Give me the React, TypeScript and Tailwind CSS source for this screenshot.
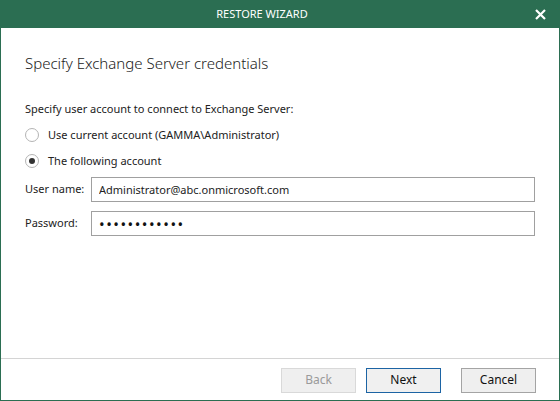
import { useState } from "react";

const font = { fontFamily: '"Noto Sans", "Open Sans", sans-serif' };

function Radio({ checked, label, onClick }: { checked: boolean; label: string; onClick: () => void }) {
  return (
    <div className="flex items-center h-[18px] cursor-default" onClick={onClick}>
      <span className="w-[14px] h-[14px] rounded-full border border-[#b4b4b4] bg-white flex items-center justify-center">
        {checked && <span className="w-[6px] h-[6px] rounded-full bg-[#333333]" />}
      </span>
      <span className="ml-[9px] text-[11px] text-[#222222]">{label}</span>
    </div>
  );
}

export default function App() {
  const [useCurrent, setUseCurrent] = useState(false);
  const [userName, setUserName] = useState("Administrator@abc.onmicrosoft.com");
  const [password, setPassword] = useState("passwordabcd");

  return (
    <div className="w-[560px] h-[401px] flex flex-col bg-white" style={font}>
      <div className="h-[28px] bg-[#2b6e52] flex items-center shrink-0">
        <div className="flex-1 text-center text-white text-[11px] pl-[4px]">RESTORE WIZARD</div>
        <div className="w-[40px] flex items-center justify-center text-white">
          <svg width="11" height="11" viewBox="0 0 11 11">
            <path d="M1 1 L10 10 M10 1 L1 10" stroke="white" strokeWidth="2.2" />
          </svg>
        </div>
      </div>

      <div className="flex-1 flex flex-col border-x border-b border-[#2b6e52]">
        <div className="flex-1 px-[24px] pt-[24px]">
          <div className="text-[15px] leading-[22px] font-light text-[#222222]">
            Specify Exchange Server credentials
          </div>
          <div className="mt-[26px] text-[11px] leading-[18px] text-[#222222]">
            Specify user account to connect to Exchange Server:
          </div>
          <div className="mt-[8px] flex flex-col gap-[8px]">
            <Radio
              checked={useCurrent}
              label="Use current account (GAMMA\Administrator)"
              onClick={() => setUseCurrent(true)}
            />
            <Radio
              checked={!useCurrent}
              label="The following account"
              onClick={() => setUseCurrent(false)}
            />
          </div>
          <div className="mt-[7px] flex flex-col gap-[9px]">
            <div className="flex items-center">
              <label className="w-[66px] text-[11px] text-[#222222]">User name:</label>
              <input
                value={userName}
                onChange={(e) => setUserName(e.target.value)}
                className="flex-1 h-[25px] border border-[#a0a0a0] px-[7px] text-[11px] text-[#222222] outline-none"
              />
            </div>
            <div className="flex items-center">
              <label className="w-[66px] text-[11px] text-[#222222]">Password:</label>
              <input
                type="password"
                value={password}
                onChange={(e) => setPassword(e.target.value)}
                className="flex-1 h-[25px] border border-[#a0a0a0] px-[7px] text-[15px] tracking-[1.5px] text-[#111111] outline-none"
              />
            </div>
          </div>
        </div>

        <div className="h-px bg-[#d4d4d4]" />
        <div className="h-[41px] flex items-center justify-end gap-[10px] pr-[23px] pt-[1px]">
          <button
            disabled
            className="w-[75px] h-[25px] bg-[#efefef] border border-[#d9d9d9] text-[12px] text-[#9a9a9a]"
          >
            Back
          </button>
          <button className="w-[75px] h-[25px] bg-[#f0f0f0] border border-[#1c64a4] text-[12px] text-[#111111] mr-[10px]">
            Next
          </button>
          <button className="w-[75px] h-[25px] bg-[#efefef] border border-[#a4a4a4] text-[12px] text-[#111111]">
            Cancel
          </button>
        </div>
      </div>
    </div>
  );
}
